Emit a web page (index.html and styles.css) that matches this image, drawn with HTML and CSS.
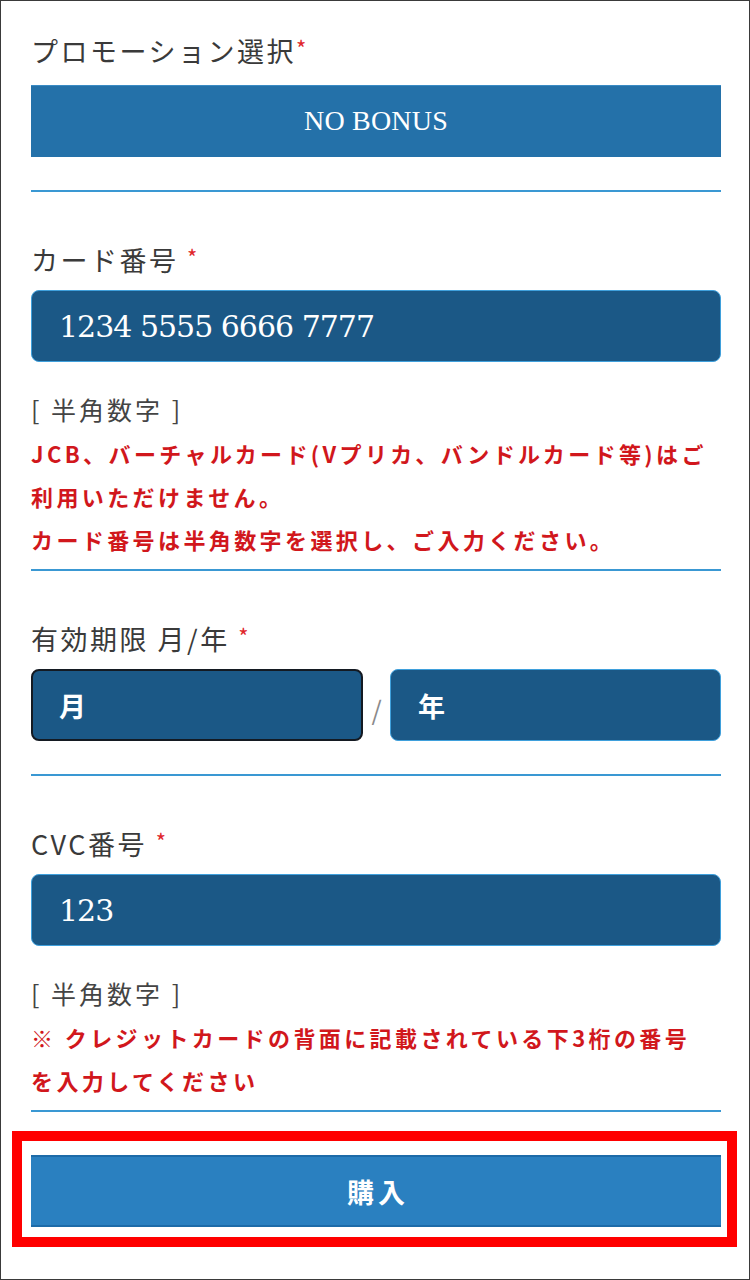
FILE: index.html
```html
<!DOCTYPE html>
<html lang="ja">
<head>
<meta charset="utf-8">
<title>カード情報入力</title>
<link rel="stylesheet" href="styles.css">
</head>
<body>
<div class="frame">
  <form class="form">
    <div class="field">
      <div class="label">プロモーション選択<span class="req">*</span></div>
      <div class="select">NO BONUS</div>
    </div>

    <div class="field field-note">
      <div class="label">カード番号 <span class="req">*</span></div>
      <input class="input input-num" type="text" value="1234 5555 6666 7777">
      <div class="hint">[ 半角数字 ]</div>
      <p class="note">JCB、バーチャルカード(Vプリカ、バンドルカード等)はご<br>利用いただけません。<br>カード番号は半角数字を選択し、ご入力ください。</p>
    </div>

    <div class="field">
      <div class="label">有効期限 月/年 <span class="req">*</span></div>
      <div class="expiry">
        <input class="input input-focus" type="text" placeholder="月">
        <span class="slash">/</span>
        <input class="input" type="text" placeholder="年">
      </div>
    </div>

    <div class="field field-note">
      <div class="label">CVC番号 <span class="req">*</span></div>
      <input class="input input-num" type="text" value="123">
      <div class="hint">[ 半角数字 ]</div>
      <p class="note">※ クレジットカードの背面に記載されている下3桁の番号<br>を入力してください</p>
    </div>

    <div class="highlight">
      <button class="buy" type="button">購入</button>
    </div>
  </form>
</div>
</body>
</html>
```

FILE: styles.css
```css
* { box-sizing: border-box; }

html, body {
  margin: 0;
  padding: 0;
  background: #ffffff;
}

body {
  font-family: "Noto Sans CJK JP", "Noto Sans", sans-serif;
  color: #383838;
}

.frame {
  width: 750px;
  height: 1280px;
  border: 1px solid #3a3a3a;
  padding: 32px 28px 0 30px;
  overflow: hidden;
}

.form {
  margin: 0;
  display: block;
}

.field {
  border-bottom: 2px solid #3a98d3;
  padding-bottom: 33px;
}

.field + .field {
  margin-top: 50px;
}

.field-note {
  padding-bottom: 8px;
}

.label {
  height: 36px;
  font-size: 27px;
  line-height: 36px;
  letter-spacing: 2.5px;
  margin-bottom: 12px;
  color: #3a3a3a;
  white-space: nowrap;
}

.field:first-child .label {
  margin-bottom: 16px;
}

.req {
  color: #e0262b;
  font-size: 22px;
  line-height: 1;
  vertical-align: 5px;
}

.select {
  height: 72px;
  background: #2471a9;
  border-top: 1px solid #3a8bc4;
  color: #ffffff;
  font-family: "Liberation Serif", "Times New Roman", serif;
  font-size: 28px;
  line-height: 70px;
  text-align: center;
  letter-spacing: 0.2px;
}

.input {
  display: block;
  width: 100%;
  height: 72px;
  margin: 0;
  padding: 0 0 0 27px;
  background: #1b5886;
  border: 1px solid #3fa0dc;
  border-radius: 8px;
  color: #ffffff;
  font-family: "Noto Sans CJK JP", sans-serif;
  font-size: 27px;
  font-weight: 700;
  outline: none;
}

.input::placeholder {
  color: #ffffff;
  opacity: 1;
}

.input-num {
  font-family: "DejaVu Serif", "Liberation Serif", serif;
  font-weight: 400;
  font-size: 30px;
  letter-spacing: -1px;
}

.input-focus {
  border: 2px solid #141a22;
  padding-left: 26px;
}

.expiry {
  display: flex;
  align-items: center;
}

.expiry .input {
  flex: 1;
  width: auto;
  min-width: 0;
}

.slash {
  width: 27px;
  text-align: center;
  color: #8a8a8a;
  font-size: 26px;
  padding-top: 6px;
}

.hint {
  margin-top: 29px;
  height: 36px;
  font-size: 25px;
  line-height: 36px;
  letter-spacing: 3px;
  color: #444444;
}

.note {
  margin: 5px 0 0;
  color: #d1171c;
  font-size: 22px;
  font-weight: 700;
  line-height: 43px;
  letter-spacing: 3.4px;
  white-space: nowrap;
}

.highlight {
  margin: 19px -16px 0 -19px;
  border: 10px solid #ff0000;
  padding: 14px 6px 10px 9px;
}

.buy {
  display: block;
  width: 100%;
  height: 72px;
  margin: 0;
  background: #2a80c0;
  border: 0;
  border-top: 2px solid #1d6ba8;
  border-bottom: 2px solid #1d6ba8;
  color: #ffffff;
  font-family: "Noto Sans CJK JP", sans-serif;
  font-size: 27px;
  font-weight: 700;
  letter-spacing: 4px;
  text-align: center;
  padding: 0 0 0 4px;
  cursor: pointer;
}
```
